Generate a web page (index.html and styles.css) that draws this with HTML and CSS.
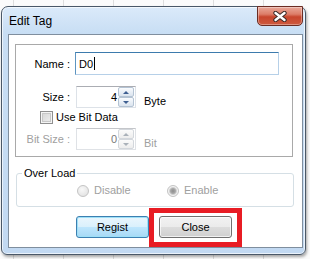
FILE: index.html
```html
<!DOCTYPE html>
<html lang="en">
<head>
    <meta charset="UTF-8">
    <title>Edit Tag</title>
    <link rel="stylesheet" href="styles.css">
</head>
<body>
    <div class="window">
        <div class="titlebar">
            <span class="title">Edit Tag</span>
            <div class="close-x">
                <svg width="16" height="11" viewBox="0 0 16 11">
                    <path d="M3.5 2 L12.5 9 M12.5 2 L3.5 9" stroke="#3a2a28" stroke-width="4.4" stroke-linecap="round"/>
                    <path d="M3.5 2 L12.5 9 M12.5 2 L3.5 9" stroke="#fff" stroke-width="2.4" stroke-linecap="round"/>
                </svg>
            </div>
        </div>
        <div class="client">
            <div class="group">
                <div class="row name-row">
                    <span class="lbl">Name :</span>
                    <div class="textbox">D0<span class="caret"></span></div>
                </div>
                <div class="row size-row">
                    <span class="lbl">Size :</span>
                    <div class="spin">
                        <span class="val">4</span>
                        <div class="spin-btns">
                            <span class="sb up"></span>
                            <span class="sb down"></span>
                        </div>
                    </div>
                    <span class="unit">Byte</span>
                </div>
                <div class="check-row">
                    <span class="checkbox"></span>
                    <span class="check-text">Use Bit Data</span>
                </div>
                <div class="row bit-row disabled">
                    <span class="lbl">Bit Size :</span>
                    <div class="spin">
                        <span class="val">0</span>
                        <div class="spin-btns">
                            <span class="sb up"></span>
                            <span class="sb down"></span>
                        </div>
                    </div>
                    <span class="unit">Bit</span>
                </div>
            </div>
            <fieldset class="overload">
                <legend>Over Load</legend>
                <div class="radios">
                    <div class="radio-item first">
                        <span class="radio"></span>
                        <span class="radio-text">Disable</span>
                    </div>
                    <div class="radio-item">
                        <span class="radio checked"></span>
                        <span class="radio-text">Enable</span>
                    </div>
                </div>
            </fieldset>
            <div class="actions">
                <div class="btn btn-default">Regist</div>
                <div class="highlight">
                    <div class="btn">Close</div>
                </div>
            </div>
        </div>
    </div>
</body>
</html>
```

FILE: styles.css
```css
html, body {
    margin: 0;
    padding: 0;
}
body {
    width: 310px;
    height: 259px;
    overflow: hidden;
    background: #fbfbfb repeating-linear-gradient(90deg, transparent 0, transparent 13px, #dedede 13px, #dedede 14px, transparent 14px, transparent 50px);
    font-family: "Liberation Sans", Arial, sans-serif;
    font-size: 11px;
    color: #000;
}

.window {
    margin: 6px 0 0 1px;
    width: 305px;
    height: 249px;
    box-sizing: border-box;
    border: 1px solid #4a5868;
    border-radius: 7px 7px 6px 6px;
    background: linear-gradient(180deg, #dbeafa 0, #c8def4 26px, #c2d9f2 100%);
    box-shadow: 1px 2px 3px rgba(0, 0, 0, 0.35), inset 0 0 0 1px rgba(255, 255, 255, 0.65);
    display: flex;
    flex-direction: column;
}

.titlebar {
    height: 27px;
    display: flex;
    align-items: flex-start;
    flex-shrink: 0;
}
.title {
    margin: 7px 0 0 7px;
    font-size: 12px;
    line-height: 14px;
}
.close-x {
    margin: -1px 2px 0 auto;
    width: 46px;
    height: 20px;
    box-sizing: border-box;
    border: 1px solid #6a2c23;
    border-radius: 0 0 5px 5px;
    background: linear-gradient(180deg, #e9a899 0, #dd7d68 40%, #c8452d 55%, #cd5a3f 100%);
    box-shadow: inset 0 0 0 1px rgba(255, 255, 255, 0.35);
    display: flex;
    align-items: center;
    justify-content: center;
}
.close-x svg {
    display: block;
}

.client {
    margin: 0 2px 6px 6px;
    flex: 1;
    border: 1px solid #7f8e9e;
    background: #fff;
}

.group {
    margin: 9px 9px 0 6px;
    height: 113px;
    box-sizing: border-box;
    border: 1px solid #a9a9a9;
}

.row {
    display: flex;
    align-items: center;
}
.lbl {
    width: 54px;
    flex-shrink: 0;
    text-align: right;
}
.name-row {
    margin-top: 7px;
    height: 23px;
}
.textbox {
    margin-left: 5px;
    width: 204px;
    height: 23px;
    box-sizing: border-box;
    border: 1px solid #b6d0e8;
    border-top-color: #3d7bad;
    border-left-color: #5d94c0;
    padding-left: 3px;
    display: flex;
    align-items: center;
}
.caret {
    width: 1px;
    height: 13px;
    margin-left: 1px;
    background: #000;
}

.size-row {
    margin-top: 11px;
    height: 22px;
}
.bit-row {
    margin-top: 4px;
    height: 22px;
}
.spin {
    margin-left: 6px;
    width: 60px;
    height: 22px;
    box-sizing: border-box;
    border: 1px solid #dde2e8;
    border-top-color: #abadb3;
    display: flex;
    align-items: stretch;
}
.val {
    flex: 1;
    text-align: right;
    line-height: 20px;
    padding-right: 1px;
}
.spin-btns {
    width: 16px;
    margin-right: 1px;
    display: flex;
    flex-direction: column;
}
.sb {
    height: 10px;
    box-sizing: border-box;
    border: 1px solid #b4c3d3;
    border-radius: 2px;
    background: linear-gradient(180deg, #fbfcfe 0, #e9eff6 50%, #dbe4ee 100%);
    display: flex;
    align-items: center;
    justify-content: center;
}
.sb::after {
    content: "";
    width: 0;
    height: 0;
    border-left: 3px solid transparent;
    border-right: 3px solid transparent;
}
.sb.up::after {
    border-bottom: 3px solid #3e5f91;
}
.sb.down::after {
    border-top: 3px solid #3e5f91;
}
.unit {
    margin-left: 8px;
    align-self: flex-end;
    line-height: 13px;
}

.disabled {
    color: #a0a0a0;
}
.disabled .val {
    color: #7a7a7a;
}
.disabled .spin {
    border-color: #dfe2e6;
    border-top-color: #c4c6ca;
}
.disabled .sb {
    border-color: #d3d7dc;
    background: linear-gradient(180deg, #fbfbfb, #ededed);
}
.disabled .sb.up::after {
    border-bottom-color: #aab1b9;
}
.disabled .sb.down::after {
    border-top-color: #aab1b9;
}

.check-row {
    margin-top: 3px;
    height: 13px;
    padding-left: 24px;
    display: flex;
    align-items: center;
}
.checkbox {
    width: 13px;
    height: 13px;
    box-sizing: border-box;
    border: 1px solid #8f8f8f;
    background: linear-gradient(135deg, #d3d3d3, #f1f1f1);
    box-shadow: inset 0 0 0 1px #f4f4f4, inset 0 0 0 2px #c8c8c8;
}
.check-text {
    margin-left: 3px;
    line-height: 13px;
}

.overload {
    margin: 10px 8px 0 7px;
    padding: 0 0 9px 5px;
    border: 1px solid #d5dfe5;
    border-radius: 3px;
    min-width: 0;
}
.overload legend {
    padding: 0 2px;
    line-height: 13px;
}
.radios {
    margin-top: 4px;
    height: 13px;
    display: flex;
    align-items: center;
}
.radio-item {
    display: flex;
    align-items: center;
    color: #a0a0a0;
}
.radio-item.first {
    margin-left: 55px;
    width: 90px;
}
.radio {
    width: 12px;
    height: 12px;
    box-sizing: border-box;
    border-radius: 50%;
    border: 1px solid #c4c4c4;
    background: radial-gradient(circle at 40% 35%, #f8f8f8, #dedede);
}
.radio.checked {
    background: radial-gradient(circle at 50% 50%, #8c8c8c 0, #a9a9a9 2.5px, #d0d0d0 3.5px, #f4f4f4 4.5px, #e2e2e2 6px);
}
.radio-text {
    margin-left: 5px;
    line-height: 13px;
}

.actions {
    margin-top: 1px;
    padding-left: 67px;
    display: flex;
    align-items: flex-start;
}
.btn {
    width: 73px;
    height: 22px;
    box-sizing: border-box;
    border: 1px solid #707070;
    border-radius: 3px;
    background: linear-gradient(180deg, #f2f2f2 0, #ebebeb 50%, #dddddd 50%, #cfcfcf 100%);
    box-shadow: inset 0 0 0 1px rgba(255, 255, 255, 0.7);
    text-align: center;
    line-height: 20px;
}
.btn-default {
    margin-top: 8px;
    border-color: #3c7fb1;
    background: linear-gradient(180deg, #eaf6fd 0, #d9f0fc 50%, #bee6fd 50%, #a7d9f5 100%);
    box-shadow: inset 0 0 0 1px #9ee0f7;
}
.highlight {
    border: 5px solid #e81c24;
    padding: 3px 5px 4px 5px;
}
```
